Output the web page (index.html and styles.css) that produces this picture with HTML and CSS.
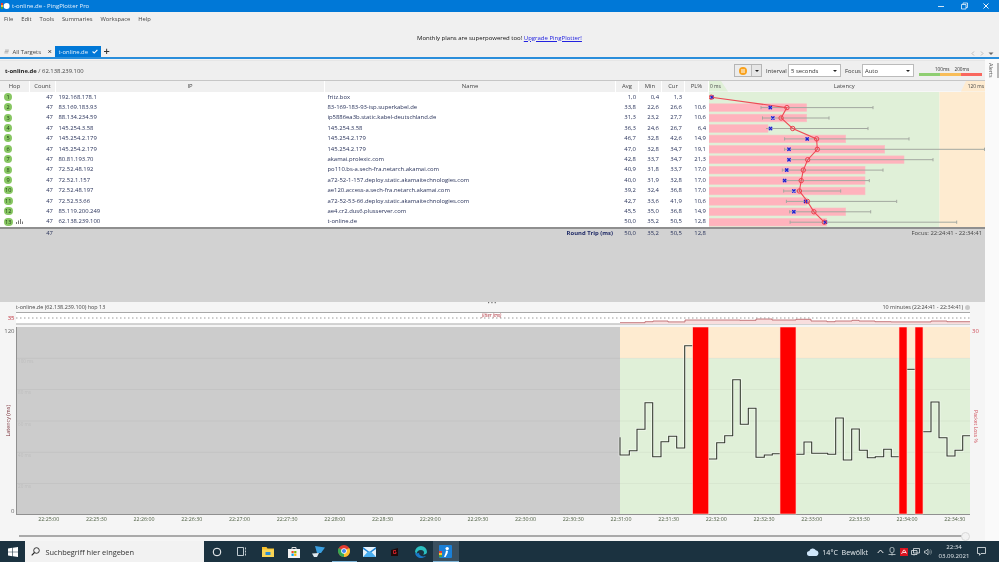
FILE: index.html
```html
<!DOCTYPE html>
<html lang="en">
<head>
<meta charset="utf-8">
<title>t-online.de - PingPlotter Pro</title>
<link rel="stylesheet" href="styles.css">
</head>
<body>
<div class="app">
  <header class="titlebar">
    <svg class="appicon" width="9" height="8" viewBox="0 0 9 8"><rect x="0" y="1" width="2" height="2" fill="#e53935"/><rect x="0" y="3" width="2" height="2" fill="#fbc02d"/><rect x="0" y="5" width="2" height="2" fill="#43a047"/><circle cx="5.6" cy="4" r="3" fill="#fff"/></svg>
    <span class="title">t-online.de - PingPlotter Pro</span>
    <div class="winctl">
      <svg width="8" height="8" viewBox="0 0 8 8"><path d="M1 4.5H7" stroke="#cfe4f7" fill="none"/></svg>
      <svg width="8" height="8" viewBox="0 0 8 8"><path d="M1.5 2.5H6V7H1.5ZM3 2.5V1H7.5V5.5H6" stroke="#e6f1fb" fill="none" stroke-width=".8"/></svg>
      <svg width="8" height="8" viewBox="0 0 8 8"><path d="M1.5 1.5L6.5 6.5M6.5 1.5L1.5 6.5" stroke="#f2f8fd" fill="none"/></svg>
    </div>
  </header>
  <nav class="menubar"><span>File</span><span>Edit</span><span>Tools</span><span>Summaries</span><span>Workspace</span><span>Help</span></nav>
  <div class="banner"><span>Monthly plans are superpowered too!</span> <a class="upgrade">Upgrade PingPlotter!</a></div>
  <div class="tabs">
    <div class="tab">
      <svg width="7" height="5" viewBox="0 0 7 5"><path d="M1.5 .5H7M1 2.5H6.5M.5 4.5H6" stroke="#999" fill="none"/></svg>
      <span>All Targets</span>
      <svg class="tabclose" width="5" height="5" viewBox="0 0 5 5"><path d="M.7 .7L4.3 4.3M4.3 .7L.7 4.3" stroke="#222" stroke-width="1.2" fill="none"/></svg>
    </div>
    <div class="tab active">
      <span>t-online.de</span>
      <svg width="7" height="5" viewBox="0 0 7 5"><path d="M.7 2.5L2.6 4.3L6.3 .7" stroke="#fff" stroke-width="1.3" fill="none"/></svg>
    </div>
    <div class="addtab">+</div>
    <div class="tabnav">
      <svg width="27" height="5" viewBox="0 0 27 5"><path d="M3 .5L1 2.5L3 4.5M10 .5L12 2.5L10 4.5" stroke="#bbb" fill="none"/><path d="M17.5 1.5H22.5L20 4Z" fill="#666"/></svg>
    </div>
  </div>
  <div class="workspace">
    <main class="main">
      <div class="targetbar">
        <div class="crumb"><b>t-online.de</b> / 62.138.239.100</div>
        <div class="pausebtn">
          <span class="pausecell"><svg width="8" height="8" viewBox="0 0 8 8"><circle cx="4" cy="4" r="4" fill="#f9a11b"/><path d="M3 2V6M5 2V6" stroke="#fff" fill="none"/></svg></span>
          <span class="pausemenu"><i class="caret"></i></span>
        </div>
        <label class="lbl lint">Interval</label>
        <div class="select wide">5 seconds<i class="caret"></i></div>
        <label class="lbl lfoc">Focus</label>
        <div class="select">Auto<i class="caret"></i></div>
        <div class="legend">
          <div class="legendtext"><span>100ms</span><span>200ms</span></div>
          <div class="legendbar"><i class="lg"></i><i class="lo"></i><i class="lr"></i></div>
        </div>
      </div>

      <div class="tablewrap">
        <div class="tableleft">
          <div class="row head">
            <div>Hop</div><div>Count</div><div>IP</div><div>Name</div><div>Avg</div><div>Min</div><div>Cur</div><div>PL%</div>
          </div>
          <div class="row"><div class="hop"><b>1</b></div><div class="r">47</div><div class="l">192.168.178.1</div><div class="l">fritz.box</div><div class="r">1,0</div><div class="r">0,4</div><div class="r">1,3</div><div class="r"></div></div>
          <div class="row"><div class="hop"><b>2</b></div><div class="r">47</div><div class="l">83.169.183.93</div><div class="l">83-169-183-93-isp.superkabel.de</div><div class="r">33,8</div><div class="r">22,6</div><div class="r">26,6</div><div class="r">10,6</div></div>
          <div class="row"><div class="hop"><b>3</b></div><div class="r">47</div><div class="l">88.134.234.59</div><div class="l">ip5886ea3b.static.kabel-deutschland.de</div><div class="r">31,3</div><div class="r">23,2</div><div class="r">27,7</div><div class="r">10,6</div></div>
          <div class="row"><div class="hop"><b>4</b></div><div class="r">47</div><div class="l">145.254.3.58</div><div class="l">145.254.3.58</div><div class="r">36,3</div><div class="r">24,6</div><div class="r">26,7</div><div class="r">6,4</div></div>
          <div class="row"><div class="hop"><b>5</b></div><div class="r">47</div><div class="l">145.254.2.179</div><div class="l">145.254.2.179</div><div class="r">46,7</div><div class="r">32,8</div><div class="r">42,6</div><div class="r">14,9</div></div>
          <div class="row"><div class="hop"><b>6</b></div><div class="r">47</div><div class="l">145.254.2.179</div><div class="l">145.254.2.179</div><div class="r">47,0</div><div class="r">32,8</div><div class="r">34,7</div><div class="r">19,1</div></div>
          <div class="row"><div class="hop"><b>7</b></div><div class="r">47</div><div class="l">80.81.193.70</div><div class="l">akamai.prolexic.com</div><div class="r">42,8</div><div class="r">33,7</div><div class="r">34,7</div><div class="r">21,3</div></div>
          <div class="row"><div class="hop"><b>8</b></div><div class="r">47</div><div class="l">72.52.48.192</div><div class="l">po110.bs-a.sech-fra.netarch.akamai.com</div><div class="r">40,9</div><div class="r">31,8</div><div class="r">33,7</div><div class="r">17,0</div></div>
          <div class="row"><div class="hop"><b>9</b></div><div class="r">47</div><div class="l">72.52.1.157</div><div class="l">a72-52-1-157.deploy.static.akamaitechnologies.com</div><div class="r">40,0</div><div class="r">31,9</div><div class="r">32,8</div><div class="r">17,0</div></div>
          <div class="row"><div class="hop"><b class="two">10</b></div><div class="r">47</div><div class="l">72.52.48.197</div><div class="l">ae120.access-a.sech-fra.netarch.akamai.com</div><div class="r">39,2</div><div class="r">32,4</div><div class="r">36,8</div><div class="r">17,0</div></div>
          <div class="row"><div class="hop"><b class="two">11</b></div><div class="r">47</div><div class="l">72.52.53.66</div><div class="l">a72-52-53-66.deploy.static.akamaitechnologies.com</div><div class="r">42,7</div><div class="r">33,6</div><div class="r">41,9</div><div class="r">10,6</div></div>
          <div class="row"><div class="hop"><b class="two">12</b></div><div class="r">47</div><div class="l">85.119.200.249</div><div class="l">ae4.cr2.dus6.plusserver.com</div><div class="r">45,5</div><div class="r">35,0</div><div class="r">36,8</div><div class="r">14,9</div></div>
          <div class="row"><div class="hop"><b class="two">13</b><svg width="7" height="5" viewBox="0 0 7 5"><path d="M.5 5V3M2.5 5V1.5M4.5 5V0M6.5 5V2.5" stroke="#777" fill="none"/></svg></div><div class="r">47</div><div class="l">62.138.239.100</div><div class="l">t-online.de</div><div class="r">50,0</div><div class="r">35,2</div><div class="r">50,5</div><div class="r">12,8</div></div>
        </div>
        <div class="tablegraph">
          <div class="graphhead">
            <svg class="headshape" width="276" height="10.5" viewBox="0 0 276 10.5"><rect width="276" height="10.5" fill="#f0f0f0"/><path d="M0 0H12L19 10.5H0Z" fill="#e0f0d8"/><path d="M257 0H276V10.5H252Z" fill="#feebd0"/></svg>
            <span class="g0">0 ms</span><span class="gmid">Latency</span><span class="g120">120 ms</span>
          </div>
          <svg class="graph" width="276" height="135.5" viewBox="0 0 276 135.5">
            <defs>
              <g id="xm"><path d="M-1.8 -1.8H1.8V1.8H-1.8Z" fill="#8f8fe8"/><path d="M-1.6 -1.6L1.6 1.6M1.6 -1.6L-1.6 1.6" stroke="#1c1cc8" stroke-width="1.1" fill="none"/></g>
              <circle id="cm" r="2.2" fill="none" stroke="#ee3f4d" stroke-width="1"/>
            </defs>
            <rect width="230.5" height="135.5" fill="#e0f0d8"/>
            <rect x="230.5" width="45.5" height="135.5" fill="#feebd0"/>
            <g fill="#ffb3bd" stroke="#f9c0c4" stroke-width=".6">
              <rect y="11.8" width="97.7" height="7.6"/>
              <rect y="22.2" width="97.7" height="7.6"/>
              <rect y="32.7" width="59" height="7.6"/>
              <rect y="43.1" width="136.7" height="7.6"/>
              <rect y="53.5" width="175.7" height="7.6"/>
              <rect y="63.9" width="195" height="7.6"/>
              <rect y="74.3" width="156" height="7.6"/>
              <rect y="84.8" width="156" height="7.6"/>
              <rect y="95.2" width="156" height="7.6"/>
              <rect y="105.6" width="97.7" height="7.6"/>
              <rect y="116" width="136.7" height="7.6"/>
              <rect y="126.4" width="117.7" height="7.6"/>
            </g>
            <path stroke="#a3a8a0" stroke-width="1" fill="none" d="M52 15.6H164M52 14V17.2M164 14V17.2M53.5 26H120M53.5 24.4V27.6M120 24.4V27.6M57 36.5H159M159 34.9V38.1M75.6 46.9H200M75.6 45.3V48.5M200 45.3V48.5M75.6 57.3H275.5M75.6 55.7V58.9M275.5 55.7V58.9M77.7 67.7H224M224 66.1V69.3M73.3 78.1H174M73.3 76.5V79.7M174 76.5V79.7M73.5 88.6H160.3M160.3 87V90.2M74.7 99H131.7M74.7 97.4V100.6M131.7 97.4V100.6M77.4 109.4H187.7M77.4 107.8V111M187.7 107.8V111M80.7 119.8H161.7M80.7 118.2V121.4M161.7 118.2V121.4M81.1 130.2H247.7M81.1 128.6V131.8M247.7 128.6V131.8"/>
            <polyline fill="none" stroke="#ee4a55" stroke-width="1.1" points="2.3,5.2 77.9,15.6 72.1,26 83.7,36.5 107.6,46.9 108.3,57.3 98.7,67.7 94.3,78.1 92.2,88.6 90.4,99 98.4,109.4 104.9,119.8 115.3,130.2"/>
            <use href="#xm" x="3" y="5.2"/><use href="#xm" x="61.3" y="15.6"/><use href="#xm" x="63.8" y="26"/><use href="#xm" x="61.5" y="36.5"/><use href="#xm" x="98.2" y="46.9"/><use href="#xm" x="80" y="57.3"/><use href="#xm" x="80" y="67.7"/><use href="#xm" x="77.7" y="78.1"/><use href="#xm" x="75.6" y="88.6"/><use href="#xm" x="84.8" y="99"/><use href="#xm" x="96.6" y="109.4"/><use href="#xm" x="84.8" y="119.8"/><use href="#xm" x="116.4" y="130.2"/>
            <use href="#cm" x="2.3" y="5.2"/><use href="#cm" x="77.9" y="15.6"/><use href="#cm" x="72.1" y="26"/><use href="#cm" x="83.7" y="36.5"/><use href="#cm" x="107.6" y="46.9"/><use href="#cm" x="108.3" y="57.3"/><use href="#cm" x="98.7" y="67.7"/><use href="#cm" x="94.3" y="78.1"/><use href="#cm" x="92.2" y="88.6"/><use href="#cm" x="90.4" y="99"/><use href="#cm" x="98.4" y="109.4"/><use href="#cm" x="104.9" y="119.8"/><use href="#cm" x="115.3" y="130.2"/>
          </svg>
        </div>
      </div>

      <div class="summary">
        <div class="row sumrow">
          <div></div><div class="r">47</div><div></div><div class="r"><b>Round Trip (ms)</b></div><div class="r">50,0</div><div class="r">35,2</div><div class="r">50,5</div><div class="r">12,8</div>
          <div class="focus">Focus: 22:24:41 - 22:34:41</div>
        </div>
      </div>

      <section class="lower">
        <div class="lowerhead">
          <span>t-online.de (62.138.239.100) hop 13</span>
          <span class="dots">• • •</span>
          <span class="range">10 minutes (22:24:41 - 22:34:41)<i class="rangeicon"></i></span>
        </div>
        <div class="jitterrow">
          <div class="axisleft red">35</div>
          <svg class="jitter" width="954" height="12.5" viewBox="0 0 954 12.5">
            <rect width="954" height="12.5" fill="#fff"/>
            <path d="M0 .5H954M0 12H954" stroke="#a8a8a8" fill="none"/>
            <path d="M604 12V10.7H629V9.7H637V9H652V9.9H669V8H724V8.3H740V7H756V8H780V7.3H795V9H811V9.7H819V9H836V8.3H843V9H859V9.7H875V9.9H915V9H931V9.7H954V12Z" fill="#f8dede"/>
            <path d="M604 10.7H629V9.7H637V9H652V9.9H669V8H724V8.3H740V7H756V8H780V7.3H795V9H811V9.7H819V9H836V8.3H843V9H859V9.7H875V9.9H915V9H931V9.7H954" stroke="#b85a60" stroke-width=".8" fill="none"/>
            <path d="M0 6H954" stroke="#9a9a9a" stroke-dasharray="1.5 2.5" fill="none"/>
            <text class="jittertext" x="466" y="5">Jitter (ms)</text>
          </svg>
        </div>
        <div class="plotrow">
          <div class="axisleft col"><span>120</span><span class="vert dark">Latency (ms)</span><span>0</span></div>
          <svg class="plot" width="954" height="188" viewBox="0 0 954 188">
            <rect width="604" height="188" fill="#cccccc"/>
            <rect x="604" width="350" height="31.3" fill="#feebd0"/>
            <rect x="604" y="31.3" width="350" height="156.7" fill="#e0f0d8"/>
            <path d="M0 31.3H954M0 62.6H954M0 94H954M0 125.3H954M0 156.6H954" stroke="#000" stroke-opacity=".04" fill="none"/>
            <path d="M.5 0V188M0 187.5H954" stroke="#909090" fill="none"/>
            <g class="gridtext"><text x="2" y="36">100 ms</text><text x="2" y="67">80 ms</text><text x="2" y="98.5">60 ms</text><text x="2" y="130">40 ms</text><text x="2" y="161">20 ms</text></g>
            <g fill="none" stroke-linejoin="miter">
              <g stroke="#fff" stroke-opacity=".7" stroke-width="2.6">
                <polyline points="604,110.3 604,128 613.3,128 613.3,123.7 621,123.7 621,102.3 629,102.3 629,75.7 636.7,75.7 636.7,129.7 645,129.7 645,114.7 652.7,114.7 652.7,109.3 660.7,109.3 660.7,121 668.7,121 668.7,18.7 676.7,18.7"/>
                <polyline points="692.7,132 700.7,132 700.7,115.7 708.7,115.7 708.7,108.7 716.7,108.7 716.7,52.7 724.3,52.7 724.3,97.3 732.3,97.3 732.3,81.3 740,81.3 740,130.3 748.3,130.3 748.3,128 756.3,128 756.3,126.7 764,126.7"/>
                <polyline points="780,127.3 788,127.3 788,115 795.7,115 795.7,126.3 811.7,126.3 811.7,127.3 819.7,127.3 819.7,91 827.3,91 827.3,133 835.7,133 835.7,102 843.3,102 843.3,123.3 851.3,123.3 851.3,130.7 859.3,130.7 859.3,129.7 867.7,129.7 867.7,122.3 875.3,122.3 875.3,129.7 883,129.7"/>
                <polyline points="891,42.3 899,42.3"/>
                <polyline points="907,104.7 915,104.7 915,75 923,75 923,110.7 931,110.7 931,129 939,129 939,123.3 946.7,123.3 946.7,108.7 954,108.7"/>
              </g>
              <g stroke="#323a2c" stroke-width="1.1">
                <polyline points="604,110.3 604,128 613.3,128 613.3,123.7 621,123.7 621,102.3 629,102.3 629,75.7 636.7,75.7 636.7,129.7 645,129.7 645,114.7 652.7,114.7 652.7,109.3 660.7,109.3 660.7,121 668.7,121 668.7,18.7 676.7,18.7"/>
                <polyline points="692.7,132 700.7,132 700.7,115.7 708.7,115.7 708.7,108.7 716.7,108.7 716.7,52.7 724.3,52.7 724.3,97.3 732.3,97.3 732.3,81.3 740,81.3 740,130.3 748.3,130.3 748.3,128 756.3,128 756.3,126.7 764,126.7"/>
                <polyline points="780,127.3 788,127.3 788,115 795.7,115 795.7,126.3 811.7,126.3 811.7,127.3 819.7,127.3 819.7,91 827.3,91 827.3,133 835.7,133 835.7,102 843.3,102 843.3,123.3 851.3,123.3 851.3,130.7 859.3,130.7 859.3,129.7 867.7,129.7 867.7,122.3 875.3,122.3 875.3,129.7 883,129.7"/>
                <polyline points="891,42.3 899,42.3"/>
                <polyline points="907,104.7 915,104.7 915,75 923,75 923,110.7 931,110.7 931,129 939,129 939,123.3 946.7,123.3 946.7,108.7 954,108.7"/>
              </g>
            </g>
            <g fill="#ff0000" stroke="#ffd9cf" stroke-width=".6">
              <rect x="676.7" width="16" height="187"/>
              <rect x="764" width="16" height="187"/>
              <rect x="883" width="8" height="187"/>
              <rect x="899" width="8" height="187"/>
            </g>
          </svg>
          <div class="axisright"><span class="red">30</span><span class="vertr">Packet Loss %</span></div>
        </div>
        <div class="timeaxis">
          <span>22:25:00</span><span>22:25:30</span><span>22:26:00</span><span>22:26:30</span><span>22:27:00</span><span>22:27:30</span><span>22:28:00</span><span>22:28:30</span><span>22:29:00</span><span>22:29:30</span><span>22:30:00</span><span>22:30:30</span><span>22:31:00</span><span>22:31:30</span><span>22:32:00</span><span>22:32:30</span><span>22:33:00</span><span>22:33:30</span><span>22:34:00</span><span>22:34:30</span>
        </div>
        <div class="sliderrow"><div class="slidertrack"></div><div class="sliderthumb"></div></div>
      </section>
    </main>
    <aside class="alerts"><span class="alertstext">Alerts</span><span class="alertsthumb"></span></aside>
  </div>
  <footer class="taskbar">
    <div class="startbtn"><svg width="10" height="10" viewBox="0 0 10 10"><path d="M0 1.4L4.4 .8V4.7H0ZM5 .7L10 0V4.7H5ZM0 5.3H4.4V9.2L0 8.6ZM5 5.3H10V10L5 9.3Z" fill="#fff"/></svg></div>
    <div class="searchbox">
      <svg width="9" height="9" viewBox="0 0 9 9"><circle cx="5.5" cy="3.5" r="2.8" fill="none" stroke="#222" stroke-width=".9"/><path d="M3.5 5.5L.7 8.3" stroke="#222" stroke-width="1.1" fill="none"/></svg>
      <span>Suchbegriff hier eingeben</span>
    </div>
    <div class="tbicon"><svg width="10" height="10" viewBox="0 0 10 10"><circle cx="5" cy="5" r="3.8" fill="none" stroke="#fff" stroke-width="1"/></svg></div>
    <div class="tbicon"><svg width="10" height="9" viewBox="0 0 10 9"><path d="M.5 .5H6.5V8.5H.5ZM8.5 .5V2.5M8.5 3.5V5.5M8.5 6.5V8.5" fill="none" stroke="#d5dde2" stroke-width=".9"/></svg></div>
    <div class="pins">
      <div class="tbicon"><svg width="12" height="11" viewBox="0 0 12 11"><path d="M0 1H4.5L5.5 2.5H12V4H0Z" fill="#f8c12d"/><rect y="3.5" width="12" height="7.5" fill="#fad555"/><rect x="3.5" y="6" width="5" height="3" fill="#2d8fd5"/></svg></div>
      <div class="tbicon"><svg width="12" height="12" viewBox="0 0 12 12"><path d="M4 3V1.5H8V3" fill="none" stroke="#ddd"/><rect y="3" width="12" height="9" fill="#f3f3f3"/><rect x="3.5" y="5" width="2.2" height="2.2" fill="#f25022"/><rect x="6.2" y="5" width="2.2" height="2.2" fill="#7fba00"/><rect x="3.5" y="7.7" width="2.2" height="2.2" fill="#00a4ef"/><rect x="6.2" y="7.7" width="2.2" height="2.2" fill="#ffb900"/></svg></div>
      <div class="tbicon"><svg width="13" height="11" viewBox="0 0 13 11"><path d="M3 0L13 1.5L9 7H5Z" fill="#3a9fe0"/><path d="M0 7.5L7 7L5 11H2Z" fill="#dfe8ee"/></svg></div>
      <div class="tbicon running"><svg width="12" height="12" viewBox="0 0 12 12"><circle cx="6" cy="6" r="6" fill="#e53b30"/><path d="M6 6L11.2 3A6 6 0 0 1 6 12Z" fill="#fbc02d"/><path d="M6 6L6 12A6 6 0 0 1 .8 3Z" fill="#36a852"/><circle cx="6" cy="6" r="2.8" fill="#fff"/><circle cx="6" cy="6" r="2.1" fill="#4285f4"/></svg></div>
      <div class="tbicon"><svg width="13" height="10" viewBox="0 0 13 10"><rect width="13" height="10" fill="#e6f2fb"/><path d="M0 0L6.5 5L13 0V2L6.5 6.5L0 2Z" fill="#1b83d4"/><path d="M0 10L5 4.5H8L13 10Z" fill="#49aef0"/></svg></div>
      <div class="tbicon"><svg width="10" height="10" viewBox="0 0 10 10"><path d="M1 3L8 1V9H1Z" fill="#21090a"/><path d="M6 3.5H3.5V6.5H6V5H5" fill="none" stroke="#d8222a" stroke-width=".9"/></svg></div>
      <div class="tbicon"><svg width="12" height="12" viewBox="0 0 12 12"><path d="M0 6A6 6 0 0 1 12 6C12 8 10 8.5 8 8.5C10 7 9 4 6 4C3 4 1.5 6 1.8 8Z" fill="#2bbfc0"/><path d="M0 6C0 10 3.5 12 6 12C7.5 12 9.5 11.5 11 10C8 11 4 10 4 7C2 7 .5 8 0 6Z" fill="#1a78c8"/></svg></div>
      <div class="tbicon active"><svg width="13" height="13" viewBox="0 0 13 13"><rect width="13" height="13" rx="1" fill="#1a80d8"/><path d="M0 6H3V8H0Z" fill="#e53935"/><path d="M0 8H3V10H0Z" fill="#fbc02d"/><path d="M0 10H3V12H0Z" fill="#43a047"/><circle cx="8.2" cy="3.6" r="1.7" fill="#fff"/><path d="M7 5.5L9 6L8.5 8.5L6.5 12H5L6.5 8Z" fill="#fff"/></svg></div>
    </div>
    <div class="tray">
      <svg class="cloud" width="12" height="8" viewBox="0 0 12 8"><path d="M2.5 8A2.5 2.5 0 0 1 2.3 3A3.6 3.6 0 0 1 8.8 2.2A3 3 0 0 1 9.5 8Z" fill="#cfe6fa"/></svg>
      <span class="weather">14°C&nbsp; Bewölkt</span>
      <svg class="t1" width="7" height="5" viewBox="0 0 7 5"><path d="M.7 4L3.5 1L6.3 4" fill="none" stroke="#eee"/></svg>
      <svg class="t2" width="8" height="9" viewBox="0 0 8 9"><rect x="2" y=".5" width="4" height="5" rx="1.5" fill="none" stroke="#c8d0d4" stroke-width=".8"/><path d="M.5 7.5H7.5M4 6V8.5" stroke="#c8d0d4" stroke-width=".8" fill="none"/></svg>
      <svg class="t3" width="8" height="8" viewBox="0 0 8 8"><rect width="8" height="8" fill="#d9121f"/><path d="M1.5 6L3.7 2H4.5L6.5 5.5M3 4.5H6" stroke="#fff" stroke-width=".8" fill="none"/></svg>
      <svg class="t4" width="9" height="8" viewBox="0 0 9 8"><path d="M2.5 .5H8.5V5H2.5ZM.5 2.5H6V6.5H.5ZM3 6.5V7.5" stroke="#dfe5e8" stroke-width=".8" fill="#1b3240"/></svg>
      <svg class="t5" width="8" height="8" viewBox="0 0 8 8"><path d="M.5 3H2L4 1V7L2 5H.5Z" fill="none" stroke="#dfe5e8" stroke-width=".7"/><path d="M5.3 2.5C6 3.4 6 4.6 5.3 5.5M6.5 1.5C7.7 3 7.7 5 6.5 6.5" fill="none" stroke="#aab5ba" stroke-width=".6"/></svg>
      <div class="clock"><span>22:34</span><span>03.09.2021</span></div>
      <svg class="t6" width="9" height="9" viewBox="0 0 9 9"><path d="M.5 .5H8.5V6.5H4L2.5 8.3V6.5H.5Z" fill="none" stroke="#e8edf0" stroke-width=".8"/></svg>
    </div>
  </footer>
</div>
</body>
</html>
```
FILE: styles.css
```css
* { box-sizing: border-box; }
html, body { margin: 0; padding: 0; overflow: hidden; }
body { font-family: "Open Sans", "Noto Sans", sans-serif; font-size: 5.9px; color: #28325a; background: #f0f0f0; }
svg { display: block; }
.app { width: 999px; height: 562px; display: flex; flex-direction: column; filter: blur(.25px); }

.titlebar { height: 12px; background: #0078d7; color: #e6f1fb; display: flex; align-items: center; padding-left: 1px; font-size: 6px; flex: none; }
.title { margin-left: 2px; }
.winctl { margin-left: auto; display: flex; gap: 14.5px; padding-right: 9px; }

.menubar { height: 13px; background: #f0f0f0; color: #444; display: flex; align-items: center; gap: 8px; padding-left: 4px; font-size: 5.8px; flex: none; }
.banner { height: 21px; background: #f0f0f0; display: flex; align-items: center; justify-content: center; gap: 1.5px; padding-top: 4px; font-size: 6px; color: #111; flex: none; }
.upgrade { color: #2222e0; text-decoration: underline; }

.tabs { height: 13px; background: #f0f0f0; border-bottom: 2px solid #2a8edb; display: flex; align-items: stretch; flex: none; white-space: nowrap; }
.tab { display: flex; align-items: center; gap: 3.5px; padding: 0 3px 0 4px; width: 55px; color: #444; font-size: 5.9px; }
.tabclose { margin-left: 4px; }
.tab.active { background: #0078d7; color: #e6f1fb; width: 46px; padding-left: 3.5px; gap: 4px; }
.addtab { font-size: 11px; line-height: 10px; font-weight: 600; color: #333; margin-left: 2.5px; }
.tabnav { margin-left: auto; padding: 5px 1px 0 0; }

.workspace { flex: 1; display: flex; min-height: 0; background: #fafafa; }
.main { width: 985px; display: flex; flex-direction: column; background: #f3f3f3; }
.alerts { width: 14px; display: flex; padding: 4px 0 0 2px; gap: 1px; align-items: flex-start; }
.alertstext { writing-mode: vertical-rl; font-size: 5.4px; color: #555; width: 8px; }
.alertsthumb { width: 4px; height: 15px; background: #b9b9b9; margin-left: 1px; }

.targetbar { height: 21px; margin-top: 1px; flex: none; background: #efefef; border-top: 1px solid #e6e6e6; border-bottom: 1px solid #c6c6c6; display: flex; align-items: center; font-size: 5.9px; color: #444; padding-left: 5px; }
.crumb { margin-right: auto; }
.crumb b { color: #222; }
.pausebtn { display: flex; height: 12.5px; border: 1px solid #b5b5b5; background: #e6e6e6; width: 28px; }
.pausecell { width: 16px; display: flex; align-items: center; justify-content: center; background: #ececec; }
.pausemenu { flex: 1; display: flex; align-items: center; justify-content: center; border-left: 1px solid #bbb; }
.caret { display: block; width: 0; height: 0; border: 2px solid transparent; border-top: 2.5px solid #222; border-bottom: 0; }
.lbl { margin: 0 2px 0 4px; color: #333; font-size: 5.9px; flex: none; white-space: nowrap; }
.lint { width: 20px; }
.lfoc { width: 15px; }
.select { width: 52px; height: 12.5px; border: 1px solid #bbb; background: #fff; display: flex; align-items: center; justify-content: space-between; padding: 0 3px 0 2px; color: #333; font-size: 5.9px; flex: none; }
.select.wide { width: 53px; }
.legend { width: 63px; margin: 0 3px 0 5px; flex: none; }
.legendtext { display: flex; justify-content: center; gap: 5px; font-size: 4.7px; color: #333; margin-left: 3px; line-height: 7px; }
.legendbar { display: flex; height: 3px; margin-top: 0; }
.legendbar i { flex: 1; }
.lg { background: #8fce72; }
.lo { background: #f8bd58; }
.lr { background: #f9675e; }

.tablewrap { display: flex; flex: none; background: #fff; }
.tableleft { width: 709px; }
.row { display: grid; grid-template-columns: 30px 26px 269px 291px 23px 23px 23px 24px; height: 10.42px; line-height: 10.42px; white-space: nowrap; }
.row.head { height: 10.5px; line-height: 10px; background: #fff; color: #444; text-align: center; }
.row.head > div { background: #f0f0f0; margin-right: 1px; }
.hop { display: flex; align-items: center; padding-left: 4px; gap: 3px; }
.hop b { display: block; width: 8px; height: 8px; border-radius: 4px; background: #88c763; color: #244418; font-weight: 400; font-size: 5.6px; line-height: 8px; text-align: center; flex: none; }
.hop b.two { width: 9.5px; margin-left: -.5px; }
.r { text-align: right; padding-right: 3px; }
.l { padding-left: 2.5px; }
.tablegraph { width: 276px; }
.graphhead { height: 10.5px; position: relative; display: flex; justify-content: space-between; line-height: 10px; color: #444; }
.headshape { position: absolute; left: 0; top: 0; }
.g0, .g120, .gmid { position: relative; }
.g0, .g120 { font-size: 4.8px; padding: 0 1px; }
.gmid { font-size: 5.9px; }

.summary { flex: none; height: 75px; background: #d2d2d2; border-top: 2px solid #8f8f8f; }
.sumrow { grid-template-columns: 30px 26px 269px 291px 23px 23px 23px 24px 276px; height: 9px; line-height: 9px; }
.sumrow b { color: #1f2a66; }
.focus { text-align: right; padding-right: 3px; color: #444; }

.lower { flex: 1; display: flex; flex-direction: column; background: #f5f5f5; }
.lowerhead { height: 10px; padding: 0 0 0 16px; display: flex; justify-content: space-between; align-items: center; color: #444; font-size: 5.45px; flex: none; }
.dots { color: #444; margin-top: -8px; margin-left: -4px; font-size: 5px; }
.range { display: flex; align-items: center; gap: 2px; padding-right: 15px; }
.rangeicon { display: block; width: 5px; height: 5px; border-radius: 50%; background: #c9c9c9; }
.jitterrow { display: flex; height: 12.5px; flex: none; }
.axisleft { width: 16px; text-align: right; padding-right: 1.5px; color: #666; font-size: 6px; line-height: 12px; flex: none; }
.axisleft.red { color: #c0303c; }
.jittertext { font-size: 4.6px; fill: #a8242e; font-style: italic; }
.plotrow { display: flex; height: 188px; margin-top: 2.5px; flex: none; }
.axisleft.col { display: flex; flex-direction: column; justify-content: space-between; align-items: flex-end; line-height: 8px; }
.vert { writing-mode: vertical-rl; transform: rotate(180deg); margin-right: 3px; line-height: 7px; }
.dark { color: #7a3038; font-size: 5.4px; }
.axisright { width: 15px; display: flex; flex-direction: column; align-items: flex-start; padding-left: 2px; font-size: 6px; line-height: 8px; }
.axisright .red { color: #d0505c; }
.vertr { writing-mode: vertical-rl; margin-top: 75px; color: #d0505c; font-size: 5px; line-height: 7px; }
.gridtext { font-size: 4.6px; fill: #bdbdbd; }
.timeaxis { height: 10px; display: flex; padding-left: 24.85px; flex: none; }
.timeaxis span { width: 47.7px; text-align: center; font-size: 5.3px; line-height: 9px; color: #4e5f43; flex: none; }
.sliderrow { flex: 1; display: flex; align-items: center; padding: 6px 15px 0 19px; }
.slidertrack { flex: 1; height: 1.5px; background: #aaaaaa; }
.sliderthumb { width: 9px; height: 9px; border-radius: 50%; background: #f2f2f2; border: 1px solid #d8d8d8; margin-left: -1px; }

.taskbar { height: 21px; background: #1b3240; display: flex; align-items: center; flex: none; color: #eef; }
.startbtn { width: 25px; height: 21px; display: flex; align-items: center; justify-content: center; }
.searchbox { width: 179px; height: 21px; background: #f2f2f2; color: #333; display: flex; align-items: center; padding-left: 6px; gap: 5.5px; font-size: 7.4px; }
.tbicon { width: 25px; height: 21px; display: flex; align-items: center; justify-content: center; }
.pins { display: flex; margin-left: 1.5px; }
.pins .tbicon { width: 25.4px; }
.tbicon.running { border-bottom: 1px solid #7fb5d8; }
.tbicon.active { background: #3a5060; border-bottom: 1px solid #7fb5d8; }
.tray { margin-left: auto; display: flex; align-items: center; height: 21px; padding-right: 13px; }
.weather { font-size: 7.1px; margin-left: 3px; color: #e8edf0; }
.t1 { margin-left: 8.5px; }
.t2 { margin-left: 4.5px; }
.t3 { margin-left: 4px; }
.t4 { margin-left: 3px; }
.t5 { margin-left: 4px; }
.clock { display: flex; flex-direction: column; align-items: center; font-size: 6.1px; line-height: 8.5px; color: #e4eaee; margin-left: 6px; width: 32px; }
.t6 { margin-left: 7px; }
```
